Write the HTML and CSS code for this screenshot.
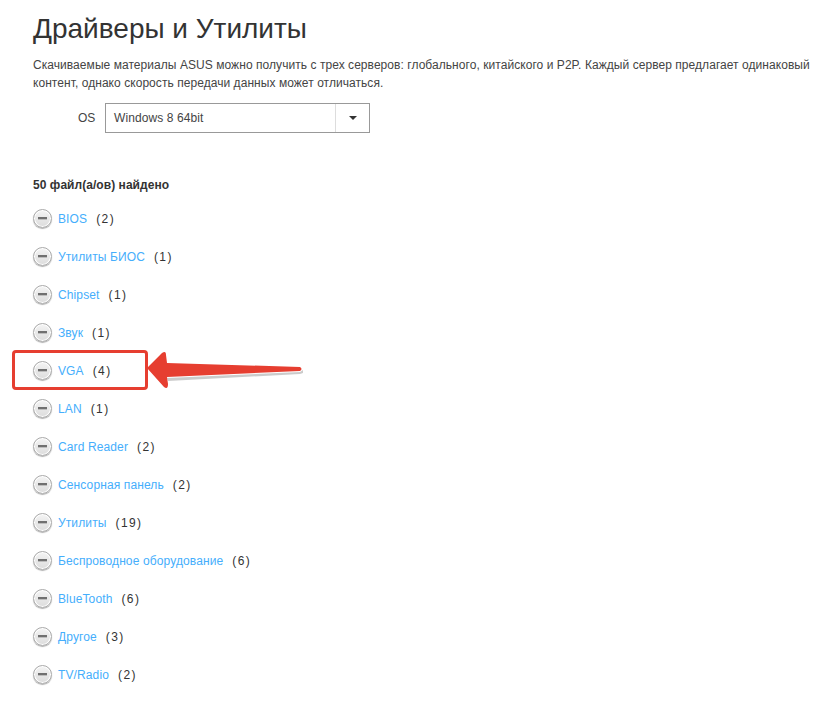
FILE: index.html
```html
<!DOCTYPE html>
<html lang="ru">
<head>
<meta charset="utf-8">
<title>Драйверы и Утилиты</title>
<link rel="stylesheet" href="styles.css">
</head>
<body>
<main class="page">
  <h1 class="title">Драйверы и Утилиты</h1>
  <p class="intro">Скачиваемые материалы ASUS можно получить с трех серверов: глобального, китайского и P2P. Каждый сервер предлагает одинаковый контент, однако скорость передачи данных может отличаться.</p>
  <div class="os-row">
    <span class="os-label">OS</span>
    <div class="select">
      <span class="select-value">Windows 8 64bit</span>
      <span class="select-btn"><span class="caret"></span></span>
    </div>
  </div>
  <div class="found">50 файл(а/ов) найдено</div>
  <ul class="list">
    <li class="row"><span class="toggle"><span class="dash"></span></span><a class="link">BIOS</a><span class="count">(2)</span></li>
    <li class="row"><span class="toggle"><span class="dash"></span></span><a class="link">Утилиты БИОС</a><span class="count">(1)</span></li>
    <li class="row"><span class="toggle"><span class="dash"></span></span><a class="link">Chipset</a><span class="count">(1)</span></li>
    <li class="row"><span class="toggle"><span class="dash"></span></span><a class="link">Звук</a><span class="count">(1)</span></li>
    <li class="row"><span class="toggle"><span class="dash"></span></span><a class="link">VGA</a><span class="count">(4)</span></li>
    <li class="row"><span class="toggle"><span class="dash"></span></span><a class="link">LAN</a><span class="count">(1)</span></li>
    <li class="row"><span class="toggle"><span class="dash"></span></span><a class="link">Card Reader</a><span class="count">(2)</span></li>
    <li class="row"><span class="toggle"><span class="dash"></span></span><a class="link">Сенсорная панель</a><span class="count">(2)</span></li>
    <li class="row"><span class="toggle"><span class="dash"></span></span><a class="link">Утилиты</a><span class="count">(19)</span></li>
    <li class="row"><span class="toggle"><span class="dash"></span></span><a class="link">Беспроводное оборудование</a><span class="count">(6)</span></li>
    <li class="row"><span class="toggle"><span class="dash"></span></span><a class="link">BlueTooth</a><span class="count">(6)</span></li>
    <li class="row"><span class="toggle"><span class="dash"></span></span><a class="link">Другое</a><span class="count">(3)</span></li>
    <li class="row"><span class="toggle"><span class="dash"></span></span><a class="link">TV/Radio</a><span class="count">(2)</span></li>
  </ul>
</main>
<div class="highlight"></div>
<svg class="arrow" width="170" height="50" viewBox="0 0 170 50" aria-hidden="true">
  <path d="M21 32 L154 26 L157 24 L157 27 L154 28 L22 35 Z" fill="#b5b5b5" opacity="0.7"/>
  <path d="M1 22 L16 7 Q20 4 20 9 L21 17 L154 21 Q157 23 154 25 L21 31 L22 38 Q22 44 18 41 Z" fill="#e63e30"/>
</svg>
</body>
</html>
```
FILE: styles.css
```css
html, body { margin: 0; padding: 0; background: #fff; }
body {
  position: relative;
  width: 834px;
  height: 714px;
  overflow: hidden;
  font-family: "Liberation Sans", Arial, sans-serif;
  color: #333;
}
.page { padding: 11px 0 0 33px; }
.title {
  margin: 0;
  font-size: 28px;
  line-height: 36px;
  font-weight: 400;
  color: #333;
}
.intro {
  margin: 9px 0 0;
  width: 795px;
  font-size: 12px;
  line-height: 18px;
  letter-spacing: 0.055px;
  color: #444;
}
.os-row {
  display: flex;
  align-items: center;
  margin: 11px 0 0 45px;
}
.os-label { width: 27px; font-size: 12px; color: #444; }
.select {
  display: flex;
  width: 263px;
  height: 28px;
  border: 1px solid #999;
  background: #fff;
}
.select-value {
  flex: 1;
  padding-left: 8px;
  font-size: 12px;
  line-height: 28px;
  letter-spacing: 0.1px;
  color: #444;
}
.select-btn {
  display: flex;
  align-items: center;
  justify-content: center;
  width: 33px;
  border-left: 1px solid #ddd;
}
.caret {
  width: 0;
  height: 0;
  border-left: 4px solid transparent;
  border-right: 4px solid transparent;
  border-top: 4px solid #333;
}
.found {
  margin-top: 44px;
  font-size: 12px;
  line-height: 16px;
  font-weight: 700;
  letter-spacing: 0.05px;
  color: #333;
}
.list { list-style: none; margin: 6px 0 0; padding: 0; }
.row {
  display: flex;
  align-items: center;
  height: 38px;
  font-size: 12px;
}
.toggle {
  display: flex;
  align-items: center;
  justify-content: center;
  box-sizing: border-box;
  width: 19px;
  height: 19px;
  margin-right: 6px;
  border: 1px solid #aaa;
  border-radius: 50%;
  background: linear-gradient(#f4f4f4, #dcdcdc);
  box-shadow: 0 1px 1px #b0b0b0, inset 0 0 0 1px #fff;
}
.dash { width: 9px; height: 2px; background: #707070; box-shadow: 0 1px 0 #bdbdbd; }
.link { padding-top: 2px; color: #45aefc; letter-spacing: 0.12px; }
.count { padding-top: 2px; margin-left: 9px; color: #333; letter-spacing: 1.4px; }
.highlight {
  position: absolute;
  left: 12px;
  top: 350px;
  width: 130px;
  height: 34px;
  border: 3px solid #e63e30;
  border-radius: 4px;
}
.arrow { position: absolute; left: 146px; top: 346px; }
```
